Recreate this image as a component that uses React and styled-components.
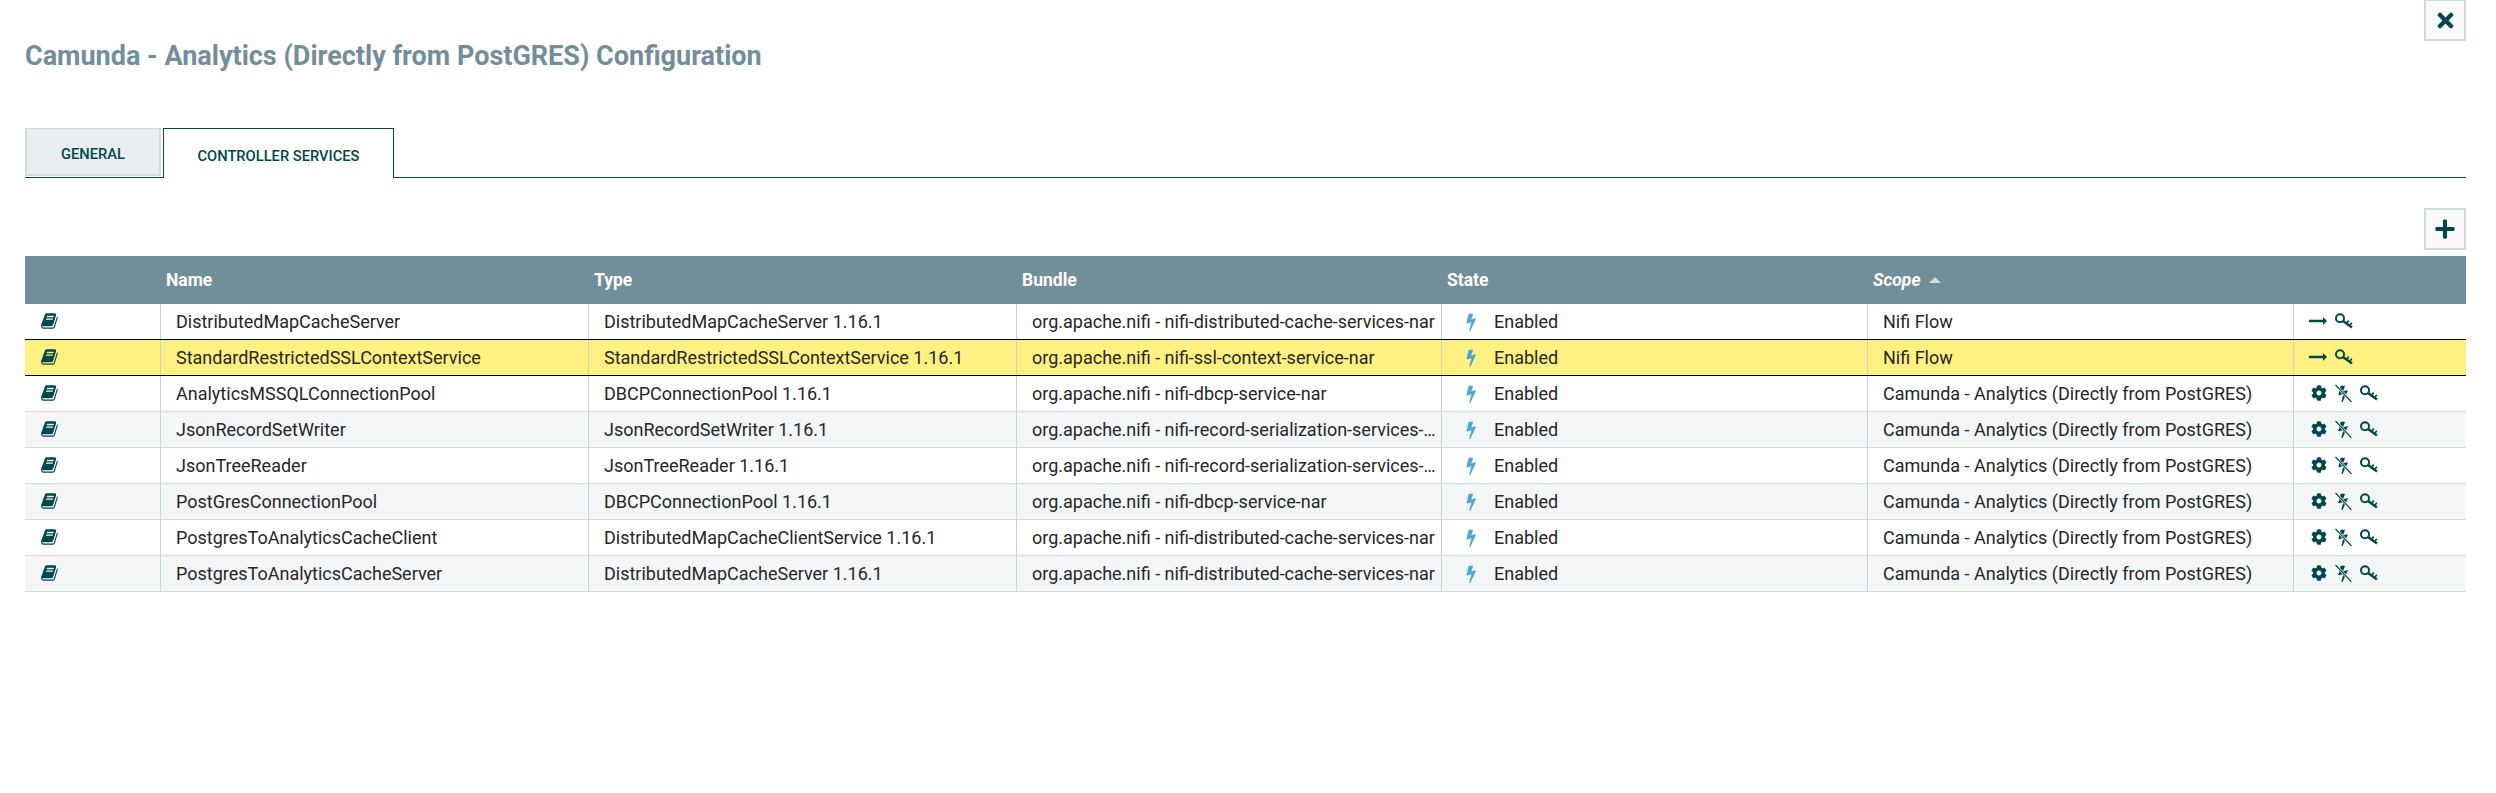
import React from "react";
import styled, { createGlobalStyle } from "styled-components";
import { FaCog, FaPlus, FaTimes } from "react-icons/fa";

const Global = createGlobalStyle`
  html, body { margin: 0; padding: 0; background: #fff; }
  body { font-family: Roboto, "Liberation Sans", sans-serif; color: #262626; overflow: hidden; }
`;
const Page = styled.div`
  padding: 0 30px 0 25px;
  height: 793px;
  box-sizing: border-box;
`;
const TopBar = styled.div`
  display: flex;
  justify-content: flex-end;
  margin-top: -1px;
`;
const IconButton = styled.button`
  width: 42px;
  height: 42px;
  padding: 0;
  background: #f8fafc;
  border: 2px solid #cfdbdd;
  color: #004849;
  display: flex;
  align-items: center;
  justify-content: center;
`;
const Title = styled.h1`
  margin: 0;
  font-size: 27px;
  line-height: 30px;
  font-weight: 700;
  color: #728e9b;
  height: 46px;
`;
const Tabs = styled.div`
  display: flex;
  margin-top: 41px;
  height: 50px;
  border-bottom: 1px solid #004849;
  box-sizing: border-box;
`;
const Tab = styled.div`
  box-sizing: border-box;
  height: ${(p) => (p.$active ? 50 : 48)}px;
  width: ${(p) => p.$w}px;
  margin-right: 2px;
  padding-top: 4px;
  display: flex;
  align-items: center;
  justify-content: center;
  font-size: 14.700px;
  font-weight: 500;
  text-transform: uppercase;
  color: #004849;
  background: ${(p) => (p.$active ? "#fff" : "#e9edf0")};
  border: ${(p) => (p.$active ? "1px solid #004849" : "2px solid #cfdbdd")};
  border-bottom: ${(p) => (p.$active ? "none" : "2px solid #cfdbdd")};
  border-top-width: 1px;
`;
const AddBar = styled.div`
  display: flex;
  justify-content: flex-end;
  margin-top: 30px;
  margin-bottom: 6px;
`;
const HeaderRow = styled.div`
  display: flex;
  height: 48px;
  background: #728e9b;
`;
const HeaderCell = styled.div`
  box-sizing: border-box;
  width: ${(p) => p.$w}px;
  padding-left: ${(p) => p.$pad}px;
  display: flex;
  align-items: center;
  gap: 8px;
  color: #fff;
  font-size: 17.500px;
  font-weight: 700;
  font-style: ${(p) => (p.$italic ? "italic" : "normal")};
`;
const SortArrow = styled.span`
  width: 0;
  height: 0;
  border-left: 6px solid transparent;
  border-right: 6px solid transparent;
  border-bottom: 6px solid #cfdbdd;
`;
const Row = styled.div`
  display: flex;
  box-sizing: border-box;
  height: 36px;
  background: ${(p) => (p.$selected ? "#fff082" : p.$odd ? "#f4f6f7" : "#fff")};
  border-bottom: 1px solid ${(p) => (p.$dark ? "#000" : "#cfdbdd")};
`;
const Cell = styled.div`
  box-sizing: border-box;
  width: ${(p) => p.$w}px;
  padding: 0 3px 1px ${(p) => p.$pad ?? 11}px;
  border-right: ${(p) => (p.$last ? "none" : "1px solid #c7d2d7")};
  display: flex;
  align-items: center;
  font-size: 18px;
  color: #262626;
  min-width: 0;
`;
const CellText = styled.span`
  white-space: nowrap;
  overflow: hidden;
  text-overflow: ellipsis;
`;
const Glyph = styled.svg`
  flex: none;
  color: ${(p) => p.$color || "#004849"};
  margin-right: ${(p) => p.$mr || 0}px;
`;
const Actions = styled.div`
  display: flex;
  align-items: center;
  gap: 8px;
  color: #004849;
`;

const BOOK = "M1639 478q40 57 18 129l-275 906q-19 64-76.500 107.500t-122.500 43.500h-923q-77 0-148.500-53.500t-99.500-131.500q-24-67-2-127 0-4 3-27t4-37q1-8-3-21.500t-3-19.500q2-11 8-21t16.500-23.500 16.500-23.500q23-38 45-91.500t30-91.500q3-10 .5-30t-.5-28q3-11 17-28t17-23q21-36 42-92t25-90q1-9-2.500-32t.5-28q4-13 22-30.500t22-22.500q19-26 42.500-84.500t27.500-96.500q1-8-3-25.500t-2-26.500q2-8 9-18t18-23 17-21q8-12 16.500-30.500t15-35 16-36 19.500-32 26.500-23.500 36-11.500 47.500 5.500l-1 3q38-9 51-9h761q74 0 114 56t18 130l-274 906q-36 119-71.500 153.500t-128.500 34.500h-869q-27 0-38 15-11 16-1 43 24 70 144 70h923q29 0 56-15.500t35-41.500l300-987q7-22 5-57 38 15 59 43zm-1064 2q-4 13 2 22.500t20 9.500h608q13 0 25.500-9.500t16.500-22.500l21-64q4-13-2-22.500t-20-9.500h-608q-13 0-25.500 9.500t-16.500 22.500zm-83 256q-4 13 2 22.500t20 9.500h608q13 0 25.500-9.500t16.500-22.500l21-64q4-13-2-22.500t-20-9.500h-608q-13 0-25.500 9.500t-16.500 22.500z";
const FLASH = "M1303 611q18 20 7 44l-540 1157q-13 25-42 25-4 0-14-2-17-5-25.500-19t-4.500-30l197-808-406 101q-4 1-12 1-18 0-31-11-18-15-13-39l201-825q4-14 16-23t28-9h328q19 0 32 12.500t13 29.500q0 8-5 18l-171 463 396-98q8-2 12-2 19 0 34 15z";

const BookIcon = () => (
  <Glyph width="18" height="18" viewBox="0 0 1792 1792"><path d={BOOK} fill="currentColor" /></Glyph>
);
const BoltIcon = () => (
  <Glyph width="19" height="19" viewBox="0 0 1792 1792" $color="#4ba5d6" $mr={13}><path d={FLASH} fill="currentColor" /></Glyph>
);
const ArrowIcon = () => (
  <svg width="18" height="10" viewBox="0 0 18 10"><path d="M0 3.800h14V1l4 4-4 4V6.200H0z" fill="currentColor" /></svg>
);
const KeyIcon = () => (
  <svg width="18" height="16" viewBox="0 0 18 16" fill="none" stroke="currentColor">
    <circle cx="5" cy="5.200" r="4" strokeWidth="2" />
    <path d="M8 8L17 14.500" strokeWidth="2.400" />
    <path d="M12 9.800l1.800-2.200M15 12l1.800-2.200" strokeWidth="1.700" />
  </svg>
);
const FlashOffIcon = () => (
  <svg width="17" height="18" viewBox="0 0 17 18">
    <g transform="translate(-1 0) scale(0.0105)"><path d={FLASH} fill="currentColor" /></g>
    <path d="M0.500 1L16.500 18" stroke="#fff" strokeWidth="2.600" />
    <path d="M0.500 1L16.500 18" stroke="currentColor" strokeWidth="1.100" />
  </svg>
);

const W = [136, 428, 428, 425, 426, 426, 172];
const P = "Camunda - Analytics (Directly from PostGRES)";
const rows = [
  ["DistributedMapCacheServer", "DistributedMapCacheServer 1.16.1", "org.apache.nifi - nifi-distributed-cache-services-nar", "Nifi Flow", false],
  ["StandardRestrictedSSLContextService", "StandardRestrictedSSLContextService 1.16.1", "org.apache.nifi - nifi-ssl-context-service-nar", "Nifi Flow", false],
  ["AnalyticsMSSQLConnectionPool", "DBCPConnectionPool 1.16.1", "org.apache.nifi - nifi-dbcp-service-nar", P, true],
  ["JsonRecordSetWriter", "JsonRecordSetWriter 1.16.1", "org.apache.nifi - nifi-record-serialization-services-nar", P, true],
  ["JsonTreeReader", "JsonTreeReader 1.16.1", "org.apache.nifi - nifi-record-serialization-services-nar", P, true],
  ["PostGresConnectionPool", "DBCPConnectionPool 1.16.1", "org.apache.nifi - nifi-dbcp-service-nar", P, true],
  ["PostgresToAnalyticsCacheClient", "DistributedMapCacheClientService 1.16.1", "org.apache.nifi - nifi-distributed-cache-services-nar", P, true],
  ["PostgresToAnalyticsCacheServer", "DistributedMapCacheServer 1.16.1", "org.apache.nifi - nifi-distributed-cache-services-nar", P, true],
];

export default function App() {
  return (
    <Page>
      <Global />
      <TopBar>
        <IconButton><FaTimes size={23} /></IconButton>
      </TopBar>
      <Title>Camunda - Analytics (Directly from PostGRES) Configuration</Title>
      <Tabs>
        <Tab $w={136}>General</Tab>
        <Tab $w={231} $active>Controller Services</Tab>
      </Tabs>
      <AddBar>
        <IconButton><FaPlus size={22} /></IconButton>
      </AddBar>
      <HeaderRow>
        <HeaderCell $w={W[0]} $pad={0} />
        <HeaderCell $w={W[1]} $pad={5}>Name</HeaderCell>
        <HeaderCell $w={W[2]} $pad={5}>Type</HeaderCell>
        <HeaderCell $w={W[3]} $pad={5}>Bundle</HeaderCell>
        <HeaderCell $w={W[4]} $pad={5}>State</HeaderCell>
        <HeaderCell $w={W[5]} $pad={5} $italic>Scope<SortArrow /></HeaderCell>
        <HeaderCell $w={W[6]} $pad={0} />
      </HeaderRow>
      {rows.map((r, i) => (
        <Row key={r[0]} $selected={i === 1} $dark={i === 0 || i === 1} $odd={i % 2 === 1}>
          <Cell $w={W[0]} $pad={16}><BookIcon /></Cell>
          <Cell $w={W[1]} $pad={15}><CellText>{r[0]}</CellText></Cell>
          <Cell $w={W[2]} $pad={15}><CellText>{r[1]}</CellText></Cell>
          <Cell $w={W[3]} $pad={15}><CellText>{r[2]}</CellText></Cell>
          <Cell $w={W[4]} $pad={20}><BoltIcon /><CellText>Enabled</CellText></Cell>
          <Cell $w={W[5]} $pad={15}><CellText>{r[3]}</CellText></Cell>
          <Cell $w={W[6]} $pad={r[4] ? 17 : 15} $last>
            <Actions>
              {r[4] ? <><FaCog size={16} /><FlashOffIcon /></> : <ArrowIcon />}
              <KeyIcon />
            </Actions>
          </Cell>
        </Row>
      ))}
    </Page>
  );
}
